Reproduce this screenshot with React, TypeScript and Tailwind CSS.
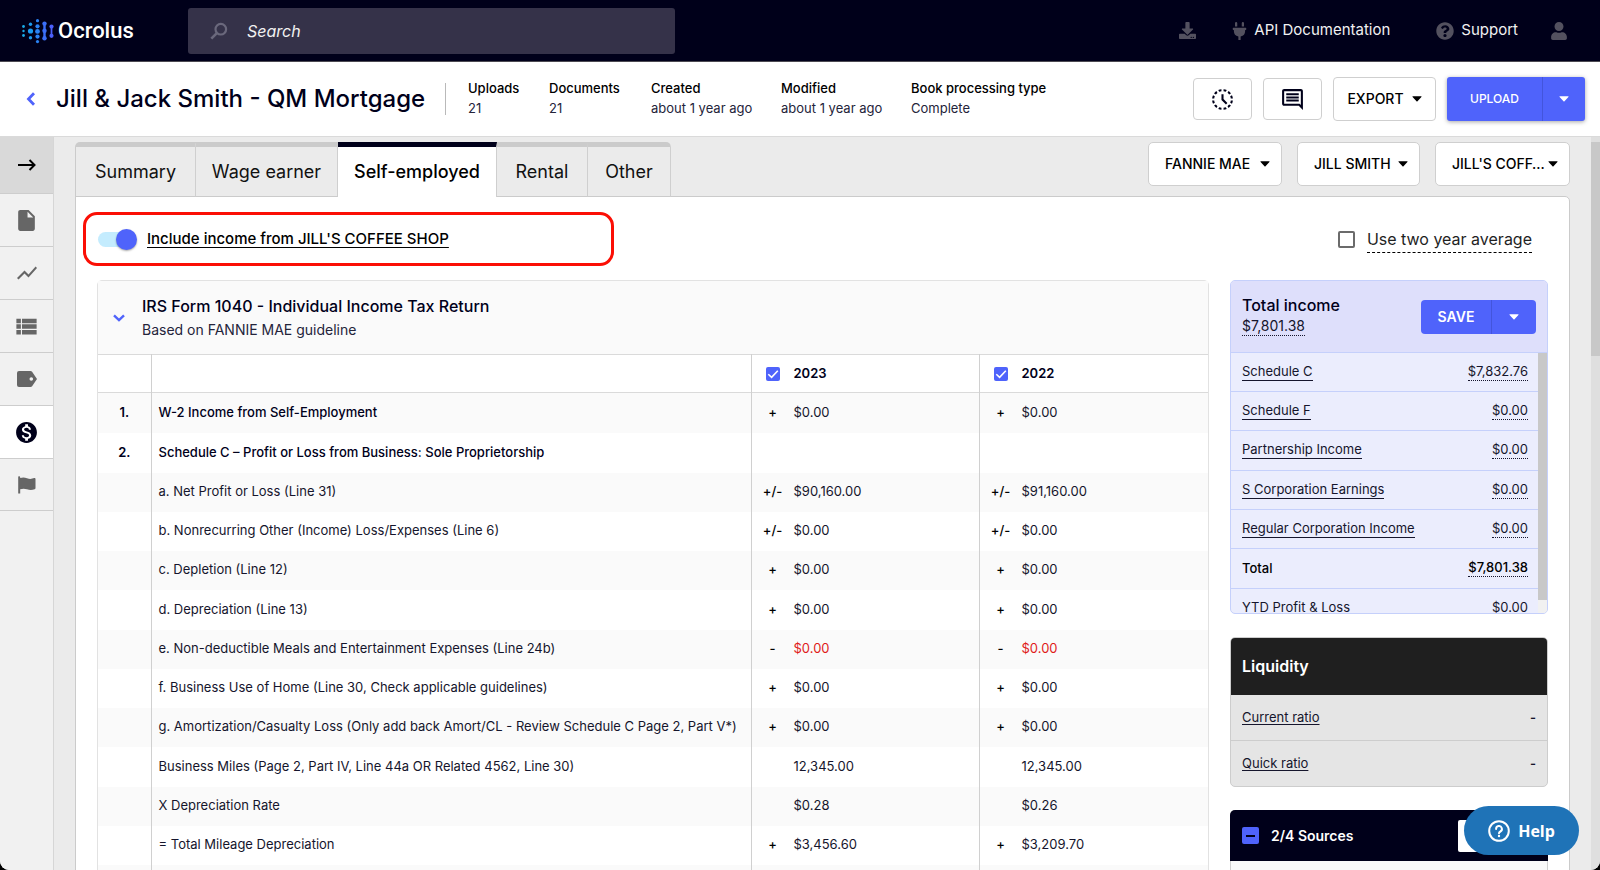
import React from "react";
import { FaDownload, FaPlug, FaQuestionCircle, FaUser } from "react-icons/fa";
import {
  MdHistoryToggleOff,
  MdInsertDriveFile,
  MdMonetizationOn,
  MdOutlineComment,
  MdShowChart,
  MdViewList,
} from "react-icons/md";

function Caret({ className = "" }: { className?: string }) {
  return (
    <svg viewBox="0 0 10 6" className={`h-[6px] w-[10px] fill-current ${className}`} aria-hidden="true">
      <path d="M1 .2h8c.5 0 .7.5.4.8L5.500 5.200a.7.7 0 0 1-1 0L.6 1C.3.7.5.200 1 .200z" />
    </svg>
  );
}

function Logo() {
  return (
    <a href="#" className="flex items-center gap-[3px] text-white" aria-label="Ocrolus">
      <svg viewBox="0 0 34 26" className="h-[26px] w-[34px]" aria-hidden="true">
        <g fill="#19a9e5">
          <circle cx="2.5" cy="8.500" r="1.400" />
          <circle cx="2.5" cy="13" r="1.2" />
          <circle cx="2.5" cy="17.5" r="1.400" />
        </g>
        <g fill="#1b9bf0">
          <circle cx="9.5" cy="6.2" r="1.7" />
          <circle cx="9.5" cy="13" r="2.6" />
          <circle cx="9.5" cy="19.8" r="1.7" />
        </g>
        <g fill="#2a83f5">
          <circle cx="16.5" cy="2.7" r="1.6" />
          <circle cx="16.5" cy="8.3" r="2.1" />
          <circle cx="16.5" cy="13.4" r="2.4" />
          <circle cx="16.5" cy="18.6" r="2.1" />
          <circle cx="16.5" cy="23.6" r="1.6" />
        </g>
        <g fill="#3b6ffa">
          <rect x="22.3" y="5" width="2.4" height="16" />
          <circle cx="23.5" cy="5.6" r="2.2" />
          <circle cx="23.5" cy="12.8" r="2.2" />
          <circle cx="23.5" cy="20.2" r="2.2" />
        </g>
        <g fill="#4b60fb">
          <rect x="29.6" y="9" width="1.8" height="9" />
          <circle cx="30.5" cy="8.6" r="2.1" />
          <circle cx="30.5" cy="17.8" r="2.1" />
        </g>
      </svg>
      <span className="font-['Roboto',sans-serif] text-[22px] leading-7 font-medium">Ocrolus</span>
    </a>
  );
}

function TopBar() {
  return (
    <header className="flex h-[62px] shrink-0 items-center border-b border-[#4c4a52] bg-[#00001a] pr-8 pl-[21px] text-[15px] text-[#f1f1f1]">
      <div className="w-[167px] shrink-0">
        <Logo />
      </div>
      <label className="flex h-[46px] w-[487px] items-center gap-[19px] rounded-[3px] bg-[#353249] pl-[22px]">
        <svg viewBox="0 0 18 18" className="size-[18px] shrink-0 fill-none stroke-[#6a687c]" aria-hidden="true">
          <circle cx="10.8" cy="7.2" r="5.3" strokeWidth="2.2" />
          <path d="M6.8 11.2 1.3 16.7" strokeWidth="2.6" />
        </svg>
        <input
          type="search"
          aria-label="Search"
          placeholder="Search"
          className="min-w-0 flex-1 bg-transparent text-base italic outline-none placeholder:text-[#f1f1f1]"
        />
      </label>
      <nav className="ml-auto flex items-center">
        <a href="#" aria-label="Downloads" className="mr-9">
          <FaDownload className="size-[17px] text-[#53515f]" />
        </a>
        <a href="#" className="mr-[46px] flex items-center gap-[7px]">
          <FaPlug className="h-[18px] w-[15px] text-[#53515f]" />
          API Documentation
        </a>
        <a href="#" className="mr-8 flex items-center gap-[7px]">
          <FaQuestionCircle className="size-[18px] text-[#53515f]" />
          Support
        </a>
        <a href="#" aria-label="Account">
          <FaUser className="size-[18px] text-[#53515f]" />
        </a>
      </nav>
    </header>
  );
}

const facts = [
  ["Uploads", "21"],
  ["Documents", "21"],
  ["Created", "about 1 year ago"],
  ["Modified", "about 1 year ago"],
  ["Book processing type", "Complete"],
];

function BookHeader() {
  return (
    <div className="flex h-[75px] shrink-0 items-center border-b border-[#dadada] bg-white pr-[15px] pl-[26px]">
      <a href="#" aria-label="Back" className="w-[30px] shrink-0">
        <svg viewBox="0 0 10 14" className="h-[14px] w-[10px] fill-none stroke-[#4f63fb]" aria-hidden="true">
          <path d="M8 1.3 2.5 7 8 12.7" strokeWidth="2.8" />
        </svg>
      </a>
      <h1 className="w-[389px] shrink-0 text-2xl font-medium whitespace-nowrap text-[#00001a]">
        Jill &amp; Jack Smith - QM Mortgage
      </h1>
      <dl className="grid h-8 grid-cols-[81px_102px_130px_130px_auto] border-l border-[#b9b9b9] pl-[22px] text-[13px] leading-5 whitespace-nowrap">
        {facts.map(([name, value]) => (
          <div key={name} className="-mt-[5px]">
            <dt className="font-medium text-black">{name}</dt>
            <dd className="text-[#24243a]">{value}</dd>
          </div>
        ))}
      </dl>
      <div className="ml-auto flex items-center">
        <button aria-label="History" className="mr-[11px] flex h-[42px] w-[59px] items-center justify-center rounded-[4px] border border-[#cfcfcf]">
          <MdHistoryToggleOff className="size-[25px] text-[#00001a]" />
        </button>
        <button aria-label="Comments" className="mr-[11px] flex h-[42px] w-[59px] items-center justify-center rounded-[4px] border border-[#cfcfcf]">
          <MdOutlineComment className="size-[25px] text-[#00001a]" />
        </button>
        <button className="mr-[11px] flex h-11 w-[103px] items-center justify-center gap-2 rounded-[4px] border border-[#cfcfcf] text-sm font-medium text-black">
          EXPORT
          <Caret />
        </button>
        <div className="flex h-11 rounded-[3px] bg-[#4f63fb] text-white shadow-[0_1px_4px_rgba(0,0,0,0.35)]">
          <button className="w-24 border-r border-[#4355dc] text-xs font-medium">UPLOAD</button>
          <button aria-label="More upload options" className="flex w-[42px] items-center justify-center">
            <Caret />
          </button>
        </div>
      </div>
    </div>
  );
}

function SideNav() {
  const item = "flex h-[53px] items-center justify-center border-b border-[#cdcdcd]";
  return (
    <nav className="w-[54px] shrink-0 border-r border-[#d6d6d6] bg-[#f1f1f1] text-[#666]">
      <button aria-label="Expand" className="flex h-[57px] w-full items-center justify-center border-b border-[#cdcdcd] bg-[#d9d9d9]">
        <svg viewBox="0 0 18 12" className="h-3 w-[18px] fill-none stroke-black stroke-2" aria-hidden="true">
          <path d="M0 6h16.5M11.5 1l5 5-5 5" />
        </svg>
      </button>
      <a href="#" aria-label="Documents" className={item}>
        <MdInsertDriveFile className="size-[25px]" />
      </a>
      <a href="#" aria-label="Trends" className={item}>
        <MdShowChart className="size-6" />
      </a>
      <a href="#" aria-label="Transactions" className={item}>
        <MdViewList className="size-[27px]" />
      </a>
      <a href="#" aria-label="Tags" className={item}>
        <svg viewBox="0 0 20 16" className="h-4 w-5 fill-current" aria-hidden="true">
          <path
            fillRule="evenodd"
            d="M2 0h11.5c.7 0 1.200.3 1.600.8L20 8l-4.900 7.200c-.4.5-.9.8-1.600.8H2a2 2 0 0 1-2-2V2a2 2 0 0 1 2-2zm12.300 6.200a1.800 1.800 0 1 0 0 3.600 1.800 1.800 0 0 0 0-3.600z"
          />
        </svg>
      </a>
      <a href="#" aria-label="Income" className={`${item} bg-white text-[#00001a]`}>
        <MdMonetizationOn className="size-[25px]" />
      </a>
      <a href="#" aria-label="Flags" className="flex h-[52px] items-center justify-center border-b border-[#cdcdcd]">
        <svg viewBox="0 0 18 18" className="size-[18px] fill-current" aria-hidden="true">
          <path d="M1 .2c.7 0 1.200.5 1.200 1.100v.8C4.500 1.300 6.500 1.300 9 2.300c2.900 1.100 5 .6 7.200-.2.800-.3 1.300.1 1.300.8v9.300c0 .5-.3.8-.8 1-2.700 1-4.800 1.100-7.700.1-2.500-.9-4.500-.8-6.800 0v4.300H.2V1.300C.2.700.5.200 1 .2z" />
        </svg>
      </a>
    </nav>
  );
}

function Tabs() {
  const idle = "h-[55px] border-t-[5px] border-r border-t-[#cbcbcb] border-r-[#cfcfcf] border-b border-b-[#cbcbcb]";
  return (
    <div role="tablist" className="flex text-lg text-[#111]">
      <button role="tab" aria-selected="false" className={`${idle} w-[121px] rounded-tl-[5px] border-l border-l-[#cbcbcb]`}>
        Summary
      </button>
      <button role="tab" aria-selected="false" className={`${idle} w-[142px]`}>
        Wage earner
      </button>
      <button role="tab" aria-selected="true" className="h-[55px] w-[159px] border-t-[5px] border-r border-t-[#00001a] border-r-[#cfcfcf] bg-white font-medium text-black">
        Self-employed
      </button>
      <button role="tab" aria-selected="false" className={`${idle} w-[91px]`}>
        Rental
      </button>
      <button role="tab" aria-selected="false" className={`${idle} w-[83px] rounded-tr-[5px]`}>
        Other
      </button>
    </div>
  );
}

function Picker({ label, value, width }: { label: string; value: string; width: string }) {
  return (
    <div className={`relative h-11 ${width}`}>
      <select
        aria-label={label}
        className="h-full w-full appearance-none rounded-[5px] border border-[#cfcfcf] bg-white pl-4 text-sm font-medium text-black"
      >
        <option>{value}</option>
      </select>
      <Caret className="pointer-events-none absolute top-[19px] right-3" />
    </div>
  );
}

type Entry = { no?: string; text: string; sign?: string; a?: string; b?: string; red?: boolean };

const entries: Entry[] = [
  { no: "1.", text: "W-2 Income from Self-Employment", sign: "+", a: "$0.00", b: "$0.00" },
  { no: "2.", text: "Schedule C – Profit or Loss from Business: Sole Proprietorship" },
  { text: "a. Net Profit or Loss (Line 31)", sign: "+/-", a: "$90,160.00", b: "$91,160.00" },
  { text: "b. Nonrecurring Other (Income) Loss/Expenses (Line 6)", sign: "+/-", a: "$0.00", b: "$0.00" },
  { text: "c. Depletion (Line 12)", sign: "+", a: "$0.00", b: "$0.00" },
  { text: "d. Depreciation (Line 13)", sign: "+", a: "$0.00", b: "$0.00" },
  { text: "e. Non-deductible Meals and Entertainment Expenses (Line 24b)", sign: "-", a: "$0.00", b: "$0.00", red: true },
  { text: "f. Business Use of Home (Line 30, Check applicable guidelines)", sign: "+", a: "$0.00", b: "$0.00" },
  { text: "g. Amortization/Casualty Loss (Only add back Amort/CL - Review Schedule C Page 2, Part V*)", sign: "+", a: "$0.00", b: "$0.00" },
  { text: "Business Miles (Page 2, Part IV, Line 44a OR Related 4562, Line 30)", a: "12,345.00", b: "12,345.00" },
  { text: "X Depreciation Rate", a: "$0.28", b: "$0.26" },
  { text: "= Total Mileage Depreciation", sign: "+", a: "$3,456.60", b: "$3,209.70" },
  { text: "" },
];

function YearHead({ year }: { year: string }) {
  return (
    <th scope="col" className="border-l border-[#d0d0d0] text-left font-semibold">
      <label className="flex items-center">
        <span className="flex w-[42px] justify-center">
          <span className="relative size-[14px]">
            <input type="checkbox" defaultChecked className="block size-[14px] appearance-none rounded-[2px] bg-[#4f63fb]" />
            <svg viewBox="0 0 14 14" className="pointer-events-none absolute inset-0 fill-none stroke-white" aria-hidden="true">
              <path d="M2.300 7.200 5.600 10.400 11.800 3.800" strokeWidth="1.600" />
            </svg>
          </span>
        </span>
        {year}
      </label>
    </th>
  );
}

function Amount({ sign, value, red }: { sign?: string; value?: string; red?: boolean }) {
  return (
    <td className="border-l border-[#d0d0d0]">
      <div className="flex">
        <span className="w-[42px] text-center font-medium text-black">{sign}</span>
        <span className={red ? "text-[#e01b1b]" : ""}>{value}</span>
      </div>
    </td>
  );
}

function FormCard() {
  return (
    <section className="min-w-0 flex-1 rounded-t-[5px] border border-[#e2e2e2]">
      <div className="flex h-[73px] items-center bg-[#fafafa] pl-[15px]">
        <button aria-label="Collapse" className="w-[29px]">
          <svg viewBox="0 0 12 8" className="h-2 w-3 fill-none stroke-[#4f63fb]" aria-hidden="true">
            <path d="M1 1.300 6 6l5-4.700" strokeWidth="2.400" />
          </svg>
        </button>
        <div>
          <h2 className="text-base leading-6 font-medium text-[#00001a]">IRS Form 1040 - Individual Income Tax Return</h2>
          <p className="text-sm leading-6 text-[#24243a]">Based on FANNIE MAE guideline</p>
        </div>
      </div>
      <table className="w-full table-fixed border-collapse text-[13px] text-[#15152c]">
        <colgroup>
          <col className="w-[53px]" />
          <col />
          <col className="w-[228px]" />
          <col className="w-[229px]" />
        </colgroup>
        <thead>
          <tr className="h-[38px] border-y border-[#dadada] text-[#00001a]">
            <td />
            <td className="border-l border-[#d0d0d0]" />
            <YearHead year="2023" />
            <YearHead year="2022" />
          </tr>
        </thead>
        <tbody>
          {entries.map((e, i) => (
            <tr key={i} className={`odd:bg-[#fafafa] ${e.no || i % 4 === 1 ? "h-10" : "h-[39px]"}`}>
              <td className="text-center font-semibold text-[#00001a]">{e.no}</td>
              <td className={`border-l border-[#d0d0d0] pl-[7px] whitespace-nowrap ${e.no ? "font-medium text-[#00001a]" : ""}`}>
                {e.text}
              </td>
              <Amount sign={e.sign} value={e.a} red={e.red} />
              <Amount sign={e.sign} value={e.b} red={e.red} />
            </tr>
          ))}
        </tbody>
      </table>
    </section>
  );
}

const incomes = [
  ["Schedule C", "$7,832.76"],
  ["Schedule F", "$0.00"],
  ["Partnership Income", "$0.00"],
  ["S Corporation Earnings", "$0.00"],
  ["Regular Corporation Income", "$0.00"],
  ["Total", "$7,801.38"],
  ["YTD Profit & Loss", "$0.00"],
];

function TotalIncome() {
  return (
    <section className="h-[334px] overflow-hidden rounded-[5px] border border-[#c5d0fb] bg-[#ebedfd] text-[13px] text-[#15152c]">
      <div className="flex h-[72px] items-center justify-between border-b border-[#c5d0fb] bg-[#dedffb] px-[11px]">
        <div className="pb-[3px]">
          <h2 className="text-base leading-6 font-medium text-[#00001a]">Total income</h2>
          <span className="inline-block border-b border-dotted border-[#15152c] text-sm leading-[18px]">$7,801.38</span>
        </div>
        <div className="flex h-[34px] rounded-[4px] bg-[#4f63fb] text-white">
          <button className="w-[71px] border-r border-[#4355dc] text-sm font-semibold">SAVE</button>
          <button aria-label="More save options" className="flex w-11 items-center justify-center">
            <Caret />
          </button>
        </div>
      </div>
      <div className="flex">
        <ul className="flex-1">
          {incomes.map(([name, value], i) => (
            <li
              key={name}
              className={`flex items-center justify-between border-b border-[#c5d0fb] pr-[10px] pb-[2px] pl-[11px] ${i % 3 === 2 ? "h-10" : "h-[39px]"} ${name === "Total" ? "font-medium text-black" : ""}`}
            >
              {i < 5 ? (
                <a href="#" className="border-b border-[#15152c] leading-[18px]">
                  {name}
                </a>
              ) : (
                <span className="leading-[18px]">{name}</span>
              )}
              <span className="border-b border-dotted border-[#15152c] leading-[18px]">{value}</span>
            </li>
          ))}
        </ul>
        <div className="h-[262px] w-[9px] bg-[#f1f1f1]">
          <div className="h-[247px] bg-[#c8c8c8]" />
        </div>
      </div>
    </section>
  );
}

function Liquidity() {
  return (
    <section className="overflow-hidden rounded-[5px] border border-[#cdcdcd] bg-[#e5e5e5] text-[13px] text-[#15152c]">
      <h2 className="flex h-[57px] items-center bg-[#1f1f1f] px-[11px] pb-[2px] text-base font-semibold text-white">Liquidity</h2>
      <div className="flex h-[46px] items-center justify-between border-b border-[#cdcdcd] px-[11px]">
        <a href="#" className="underline underline-offset-2">Current ratio</a>
        <span className="font-semibold">-</span>
      </div>
      <div className="flex h-[45px] items-center justify-between px-[11px]">
        <a href="#" className="underline underline-offset-2">Quick ratio</a>
        <span className="font-semibold">-</span>
      </div>
    </section>
  );
}

function Sources() {
  return (
    <section className="rounded-t-[5px] border-x border-[#d0d0d0] bg-[#fafafa]">
      <div className="-mx-px flex h-[51px] items-center rounded-t-[5px] bg-[#00001a] px-3 text-sm font-semibold text-white">
        <button aria-label="Clear sources" className="mr-3 flex size-[17px] items-center justify-center rounded-[2px] bg-[#4f63fb]">
          <span className="h-[2px] w-[9px] bg-[#00001a]" />
        </button>
        2/4 Sources
        <button aria-label="Source options" className="ml-auto h-8 w-[78px] rounded-[2px] bg-white" />
      </div>
      <div className="h-10" />
    </section>
  );
}

export default function App() {
  return (
    <div className="h-screen bg-black font-['Inter',sans-serif]">
      <div className="relative flex h-full flex-col overflow-hidden rounded-b-[9px] bg-[#ebebeb]">
        <TopBar />
        <BookHeader />
        <div className="flex min-h-0 flex-1">
          <SideNav />
          <main className="min-w-0 flex-1 overflow-hidden pt-[5px] pr-[21px] pl-[21px]">
            <div className="flex justify-between">
              <Tabs />
              <div className="flex gap-[15px]">
                <Picker label="Guideline" value="FANNIE MAE" width="w-[134px]" />
                <Picker label="Borrower" value="JILL SMITH" width="w-[123px]" />
                <Picker label="Business" value="JILL'S COFF…" width="w-[135px]" />
              </div>
            </div>
            <div className="-mt-px rounded-tr-[5px] border border-[#cbcbcb] bg-white pt-[15px] pr-[21px] pl-[7px]">
              <div className="flex items-center justify-between">
                <label className="flex h-[54px] w-[531px] items-center rounded-[14px] border-[3px] border-[#fb0f05] pl-3 text-[15px] font-medium text-black">
                  <span className="relative mr-[10px] flex h-[21px] w-[39px] items-center">
                    <input
                      type="checkbox"
                      role="switch"
                      defaultChecked
                      className="h-[15px] w-9 appearance-none rounded-full bg-[#c4ecfe]"
                    />
                    <span className="pointer-events-none absolute top-0 right-0 size-[21px] rounded-full bg-[#4f63fb] shadow-[0_1px_2px_rgba(0,0,0,0.35)]" />
                  </span>
                  <span className="underline decoration-1 underline-offset-[3px]">Include income from JILL'S COFFEE SHOP</span>
                </label>
                <label className="mr-4 flex items-center gap-3 text-base text-[#1f1f1f]">
                  <input type="checkbox" className="size-[17px] appearance-none rounded-[2px] border-2 border-[#6b6b6b]" />
                  <span className="border-b border-dashed border-black leading-[26px]">Use two year average</span>
                </label>
              </div>
              <div className="mt-[14px] flex items-start gap-[21px] pl-[14px]">
                <FormCard />
                <aside className="flex w-[318px] shrink-0 flex-col gap-[23px]">
                  <TotalIncome />
                  <Liquidity />
                  <Sources />
                </aside>
              </div>
            </div>
          </main>
          <div className="w-[9px] shrink-0 bg-[#dfdfdf] pt-[5px]">
            <div className="h-[214px] bg-[#c8c8c8]" />
          </div>
        </div>
        <button className="absolute right-[21px] bottom-[15px] flex h-[49px] w-[115px] items-center justify-center gap-2 rounded-full bg-[#1f73b7] font-['Open_Sans',sans-serif] text-base font-bold text-white">
          <svg viewBox="0 0 22 22" className="size-[22px] fill-none stroke-white stroke-2" aria-hidden="true">
            <circle cx="11" cy="11" r="9.800" />
            <path d="M8.100 9a2.900 2.900 0 1 1 4.300 2.500c-.9.5-1.400 1-1.400 1.800" strokeLinecap="round" />
            <circle cx="11" cy="16" r="1.200" fill="white" stroke="none" />
          </svg>
          Help
        </button>
      </div>
    </div>
  );
}
